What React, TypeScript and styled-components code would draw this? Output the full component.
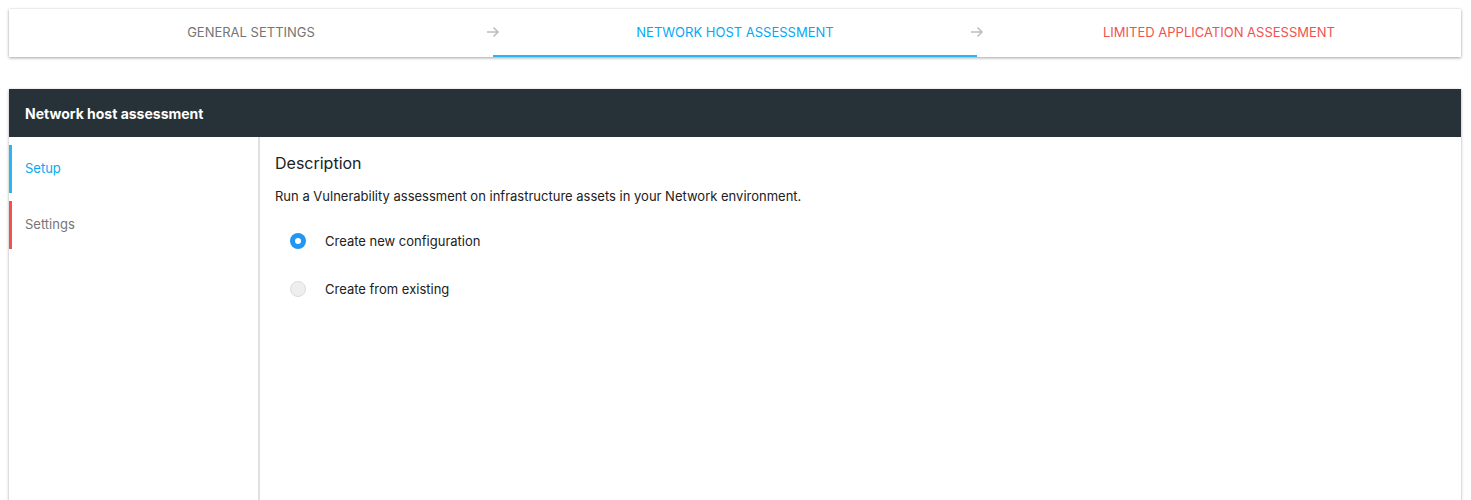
import React, { useState } from 'react'
import styled, { createGlobalStyle } from 'styled-components'

const colors = {
  blue: '#03a9f4',
  red: '#ef5350',
  grey: '#757575',
  dark: '#263238',
  text: '#212121',
  radio: '#2196f3',
}

const GlobalStyle = createGlobalStyle`
  body {
    margin: 0;
    background: #ffffff;
    font-family: Inter, "Noto Sans", sans-serif;
    color: ${colors.text};
  }
`

const Page = styled('div')({
  padding: '9px 10px 0 9px',
  display: 'flex',
  flexDirection: 'column',
  gap: '32px',
})

const Stepper = styled('nav')({
  display: 'grid',
  gridTemplateColumns: 'repeat(3, 1fr)',
  height: '48px',
  background: '#fff',
  boxShadow: '0 1px 3px rgba(0,0,0,0.35), 0 0 1px rgba(0,0,0,0.12)',
})

const Step = styled('div')<{ $color: string; $active?: boolean }>(({ $color, $active }) => ({
  position: 'relative',
  display: 'flex',
  alignItems: 'center',
  justifyContent: 'center',
  fontSize: '13px',
  letterSpacing: '0px',
  textTransform: 'uppercase',
  color: $color,
  borderBottom: `2px solid ${$active ? '#29b6f6' : 'transparent'}`,
}))

const Arrow = styled('svg')({
  position: 'absolute',
  left: '-7px',
  top: '16px',
  width: '14px',
  height: '14px',
})

const Panel = styled('section')({
  display: 'flex',
  flexDirection: 'column',
  boxShadow: '0 1px 3px rgba(0,0,0,0.3), 0 0 1px rgba(0,0,0,0.1)',
  minHeight: '420px',
})

const PanelHeader = styled('header')({
  height: '48px',
  display: 'flex',
  alignItems: 'center',
  padding: '0 16px',
  background: colors.dark,
  color: '#fff',
  fontWeight: 700,
  fontSize: '14px',
})

const PanelBody = styled('div')({
  display: 'flex',
  flex: 1,
})

const Sidebar = styled('aside')({
  width: '249px',
  borderRight: '2px solid #e0e0e0',
  paddingTop: '8px',
  display: 'flex',
  flexDirection: 'column',
  gap: '8px',
})

const SideItem = styled('div')<{ $accent: string; $active?: boolean }>(({ $accent, $active }) => ({
  height: '48px',
  display: 'flex',
  alignItems: 'center',
  paddingLeft: '13px',
  paddingBottom: '2px',
  boxSizing: 'border-box',
  borderLeft: `3px solid ${$accent}`,
  fontSize: '13px',
  color: $active ? colors.blue : colors.grey,
}))

const Content = styled('div')({
  flex: 1,
  padding: '16px 15px',
})

const Title = styled('h2')({
  margin: 0,
  fontSize: '16px',
  fontWeight: 400,
  lineHeight: '20px',
})

const Description = styled('p')({
  margin: '14px 0 0',
  fontSize: '13px',
  lineHeight: '18px',
})

const Options = styled('div')({
  marginTop: '28px',
  display: 'flex',
  flexDirection: 'column',
  gap: '32px',
  paddingLeft: '15px',
})

const Option = styled('label')({
  display: 'flex',
  alignItems: 'center',
  gap: '19px',
  fontSize: '13px',
  cursor: 'pointer',
})

const Radio = styled('span')<{ $checked: boolean }>(({ $checked }) => ({
  width: '16px',
  height: '16px',
  borderRadius: '50%',
  boxSizing: 'border-box',
  display: 'flex',
  alignItems: 'center',
  justifyContent: 'center',
  background: $checked ? colors.radio : '#eeeeee',
  border: $checked ? 'none' : '1px solid #dcdcdc',
  '&::after': {
    content: '""',
    width: '6px',
    height: '6px',
    borderRadius: '50%',
    background: $checked ? '#fff' : 'transparent',
  },
}))

function StepArrow() {
  return (
    <Arrow viewBox="0 0 14 14" fill="none" stroke="#bdbdbd" strokeWidth="1.5">
      <path d="M1 7h11M7.5 2.5L12 7l-4.5 4.5" />
    </Arrow>
  )
}

export default function App(): JSX.Element {
  const [choice, setChoice] = useState<'new' | 'existing'>('new')

  return (
    <>
      <GlobalStyle />
      <Page>
        <Stepper>
          <Step $color={colors.grey}>General settings</Step>
          <Step $color={colors.blue} $active>
            <StepArrow />
            Network host assessment
          </Step>
          <Step $color={colors.red}>
            <StepArrow />
            Limited application assessment
          </Step>
        </Stepper>
        <Panel>
          <PanelHeader>Network host assessment</PanelHeader>
          <PanelBody>
            <Sidebar>
              <SideItem $accent="#29b6f6" $active>Setup</SideItem>
              <SideItem $accent={colors.red}>Settings</SideItem>
            </Sidebar>
            <Content>
              <Title>Description</Title>
              <Description>
                Run a Vulnerability assessment on infrastructure assets in your Network environment.
              </Description>
              <Options>
                <Option onClick={() => setChoice('new')}>
                  <Radio $checked={choice === 'new'} />
                  Create new configuration
                </Option>
                <Option onClick={() => setChoice('existing')}>
                  <Radio $checked={choice === 'existing'} />
                  Create from existing
                </Option>
              </Options>
            </Content>
          </PanelBody>
        </Panel>
      </Page>
    </>
  )
}
